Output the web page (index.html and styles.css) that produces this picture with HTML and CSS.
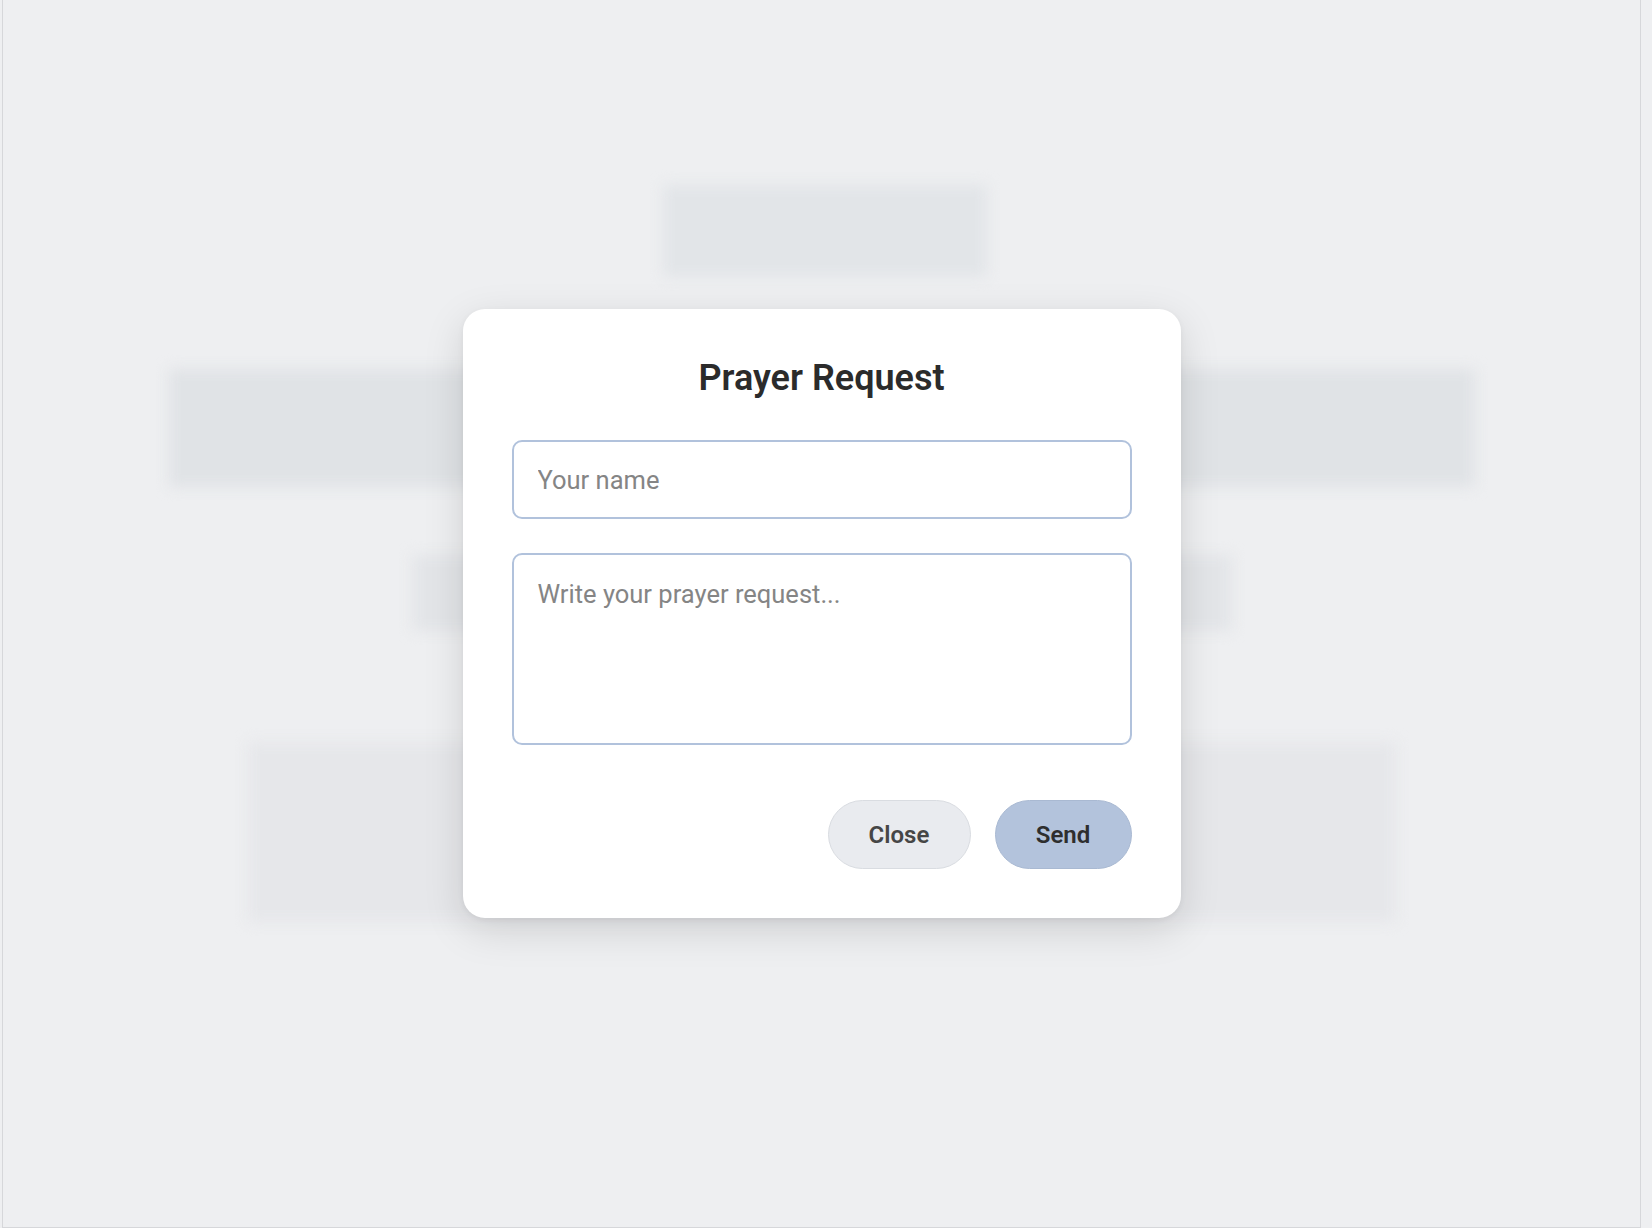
FILE: index.html
```html
<!DOCTYPE html>
<html lang="en">
<head>
<meta charset="utf-8">
<title>Prayer Request</title>
<link rel="stylesheet" href="styles.css">
</head>
<body>
<div class="frame">
  <div class="backdrop">
    <div class="blk blk-1"></div>
    <div class="blk blk-2"></div>
    <div class="blk blk-3"></div>
    <div class="blk blk-4"></div>
  </div>
  <div class="overlay">
    <form class="modal">
      <h2 class="modal-title">Prayer Request</h2>
      <input class="field field-name" type="text" placeholder="Your name">
      <textarea class="field field-msg" placeholder="Write your prayer request..."></textarea>
      <div class="actions">
        <button type="button" class="btn btn-close">Close</button>
        <button type="button" class="btn btn-send">Send</button>
      </div>
    </form>
  </div>
</div>
</body>
</html>
```

FILE: styles.css
```css
* { box-sizing: border-box; }

html, body {
  margin: 0;
  padding: 0;
  background: #eeeff1;
  font-family: Roboto, "Noto Sans", "Liberation Sans", sans-serif;
}

.frame {
  position: relative;
  width: 1639px;
  height: 1228px;
  margin-left: 2px;
  border-left: 1px solid #d6d7da;
  border-right: 1px solid #d6d7da;
  border-bottom: 1px solid #d6d7da;
  background: #eeeff1;
  overflow: hidden;
}

.backdrop {
  display: flex;
  flex-direction: column;
  align-items: center;
  padding-top: 185px;
  filter: blur(7px);
}

.blk { background: #e2e5e8; }
.blk-1 { width: 324px; height: 92px; margin-left: 6px; }
.blk-2 { width: 1306px; height: 118px; margin-top: 92px; background: #e0e3e6; }
.blk-3 { width: 820px; height: 76px; margin-top: 68px; background: #e3e5e8; }
.blk-4 { width: 1148px; height: 180px; margin-top: 111px; background: #e6e7ea; }

.overlay {
  position: absolute;
  inset: 0;
  display: flex;
  justify-content: center;
  align-items: flex-start;
  padding-top: 309px;
}

.modal {
  width: 718px;
  background: #ffffff;
  border-radius: 22px;
  padding: 48px 49px 49px;
  box-shadow: 0 12px 40px rgba(0, 0, 0, 0.13), 0 2px 6px rgba(0, 0, 0, 0.05);
  display: flex;
  flex-direction: column;
}

.modal-title {
  margin: 0 0 41px;
  text-align: center;
  font-size: 36px;
  line-height: 42px;
  font-weight: 600;
  color: #2b2b2b;
}

.field {
  display: block;
  width: 100%;
  border: 2px solid #b1c2dc;
  border-radius: 10px;
  background: #fff;
  font-family: Roboto, "Noto Sans", "Liberation Sans", sans-serif;
  font-size: 25.5px;
  color: #333;
  outline: none;
  padding: 0 24px;
}

.field::placeholder { color: #858585; }

.field-name {
  height: 79px;
}

.field-msg {
  margin-top: 34px;
  height: 192px;
  padding-top: 24px;
  line-height: 30px;
  resize: none;
}

.actions {
  margin-top: 55px;
  display: flex;
  justify-content: flex-end;
  gap: 24px;
}

.btn {
  height: 69px;
  padding: 0 40px;
  border-radius: 35px;
  font-family: Roboto, "Noto Sans", "Liberation Sans", sans-serif;
  font-size: 24px;
  font-weight: 600;
  cursor: pointer;
}

.btn-close {
  background: #e9ebef;
  border: 1px solid #d9dce1;
  color: #464646;
  width: 143px;
}

.btn-send {
  background: #b3c3dc;
  border: 1px solid #a9b9d2;
  color: #2e2e2e;
  width: 137px;
}
```
